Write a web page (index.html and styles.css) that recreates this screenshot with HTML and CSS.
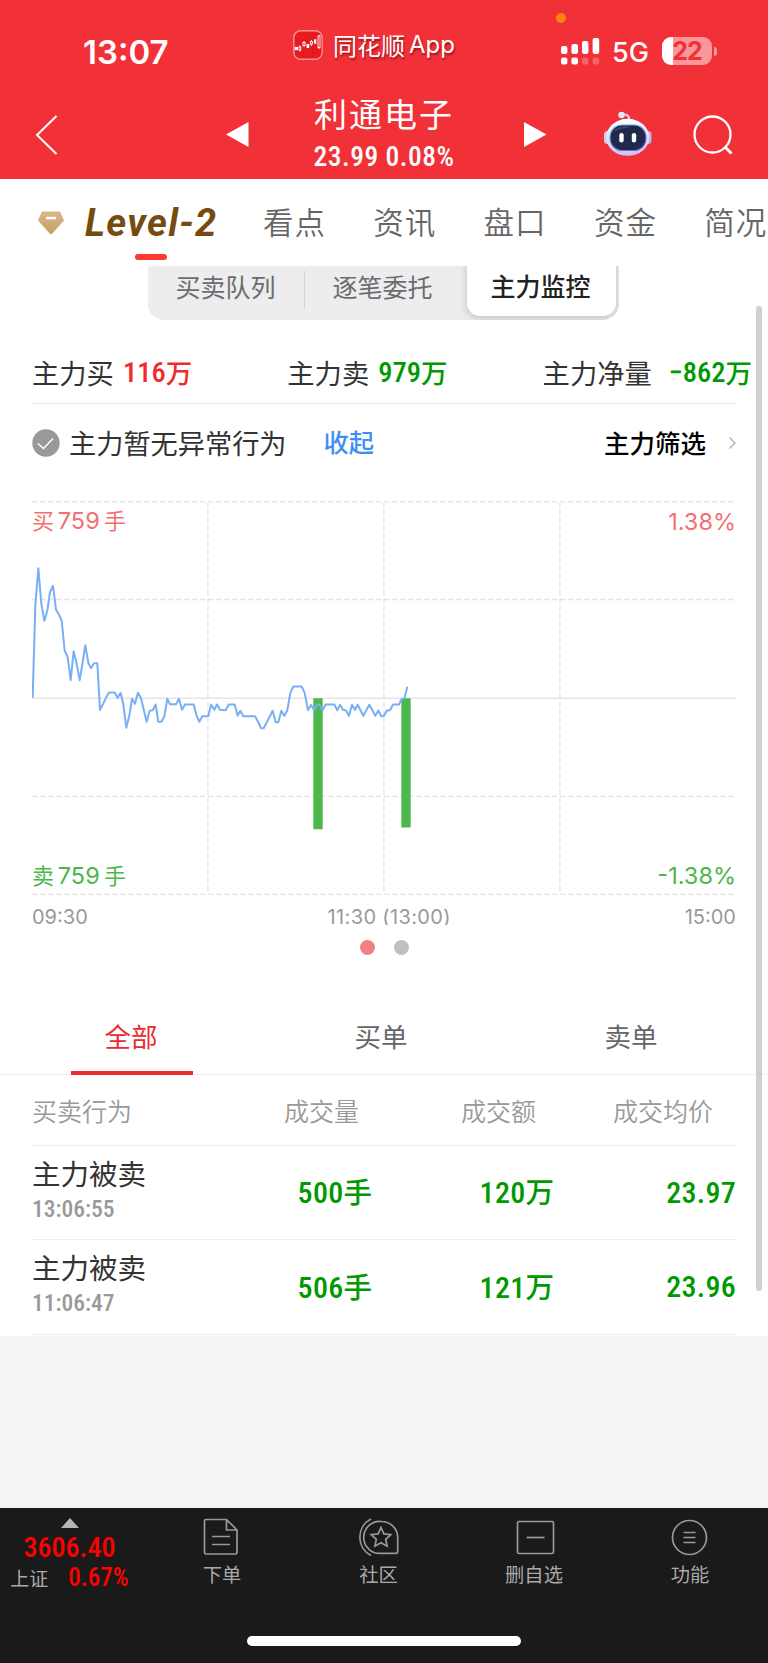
FILE: index.html
```html
<!DOCTYPE html>
<html lang="zh-CN">
<head>
<meta charset="utf-8">
<meta name="viewport" content="width=device-width">
<title>利通电子</title>
<link rel="stylesheet" href="styles.css">
</head>
<body>
<div class="app">
  <header class="header">
    <div class="status">
      <span class="clock">13:07</span>
      <div class="app-return">
        <svg class="app-icon" width="30" height="30" viewBox="0 0 30 30" fill="none">
          <rect x=".8" y=".8" width="28.4" height="28.4" rx="7" fill="#e51c20" stroke="#f99090" stroke-width="1.4"/>
          <path d="M2 10H28M20 2V28" stroke="#d81a20" stroke-width=".6"/>
          <g stroke="#fff" stroke-width=".9">
            <rect x="2" y="17.3" width="2.600" height="2.400" fill="#fff"/>
            <path d="M6.900 15.500v6"/><rect x="6" y="17" width="1.800" height="3" fill="#e51c20"/>
            <path d="M11 11v6"/><rect x="10" y="12.500" width="2" height="3" fill="#e51c20"/>
            <rect x="14" y="14.400" width="1.800" height="3.200" fill="#fff"/>
            <path d="M18.400 10v6"/><rect x="17.500" y="11.500" width="1.800" height="2.600" fill="#e51c20"/>
            <rect x="21.400" y="9.800" width="1.400" height="3.400" fill="#fff"/>
            <path d="M26 5v14"/><rect x="25" y="6" width="2" height="11.400" fill="#e51c20"/>
          </g>
        </svg>
        <span class="app-name">同花顺</span><span class="app-name-en">App</span>
      </div>
      <i class="privacy-dot"></i>
      <svg class="signal" width="39" height="28" viewBox="0 0 39 28" fill="#fff">
        <rect x="0" y="9" width="6.4" height="8" rx="2"/><rect x="10.4" y="7" width="6.6" height="10" rx="2"/>
        <rect x="21" y="4" width="6.4" height="13" rx="2"/><rect x="31.6" y="1" width="6.6" height="16" rx="2"/>
        <rect x="0" y="20.5" width="6.4" height="7" rx="2"/><rect x="10.4" y="20.5" width="6.6" height="7" rx="2"/>
        <rect x="21" y="20.5" width="6.4" height="7" rx="2" opacity=".25"/><rect x="31.6" y="20.5" width="6.6" height="7" rx="2" opacity=".25"/>
      </svg>
      <span class="net">5G</span>
      <div class="battery"><span class="battery-cell">22</span><i class="battery-nub"></i></div>
    </div>
    <div class="titlebar">
      <svg class="back" width="24" height="42" viewBox="0 0 24 42" fill="none" stroke="#fff" stroke-width="2"><path d="M21.5 2L2 21L21.5 40"/></svg>
      <svg class="prev" width="23" height="26" viewBox="0 0 23 26" fill="#fff"><path d="M0 12.5L22.5 0V25Z"/></svg>
      <div class="title">
        <h1 class="stock">利通电子</h1>
        <span class="quote din">23.99 0.08%</span>
      </div>
      <svg class="next" width="23" height="26" viewBox="0 0 23 26" fill="#fff"><path d="M22.5 12.5L0 0V25Z"/></svg>
      <svg class="robot" width="50" height="46" viewBox="0 0 50 46">
        <defs>
          <linearGradient id="shell" x1="0" y1="0" x2="0" y2="1"><stop offset="0" stop-color="#fff"/><stop offset="1" stop-color="#c9c5ef"/></linearGradient>
          <linearGradient id="rim" x1="0" y1="0" x2="1" y2="1"><stop offset="0" stop-color="#58c6dc"/><stop offset="1" stop-color="#8a4de0"/></linearGradient>
        </defs>
        <path d="M18 4.500C23 2 26.500 4.500 26 9" fill="none" stroke="#dcdcf6" stroke-width="2"/>
        <circle cx="18.500" cy="4" r="3.200" fill="#e3e6fa"/>
        <rect x="1" y="20" width="7" height="13" rx="3.500" fill="#cfcdee"/><rect x="41.500" y="20" width="7" height="13" rx="3.500" fill="#b9b8e4"/>
        <ellipse cx="24.700" cy="26.300" rx="21.500" ry="18.500" fill="url(#shell)"/>
        <rect x="7" y="14" width="36" height="25.500" rx="12" fill="#20294a" stroke="url(#rim)" stroke-width="1.200"/>
        <path d="M12 20Q16 16 25 16" fill="none" stroke="#4a5376" stroke-width="2" opacity=".6"/>
        <rect x="16.300" y="22" width="4.400" height="9.500" rx="2.200" fill="#fff"/><rect x="28.800" y="22" width="4.400" height="9.500" rx="2.200" fill="#fff"/>
      </svg>
      <svg class="search" width="41" height="41" viewBox="0 0 41 41" fill="none" stroke="#fff" stroke-width="2.300"><circle cx="19.500" cy="19.500" r="18"/><path d="M31.500 31.500L38.500 38.500" stroke-width="2.800"/></svg>
    </div>
  </header>

  <nav class="tabs">
    <svg class="gem" width="28" height="26" viewBox="0 0 28 26"><defs><linearGradient id="gold" x1="0" y1="0" x2="0" y2="1"><stop offset="0" stop-color="#d8b88b"/><stop offset="1" stop-color="#c99e61"/></linearGradient></defs><path d="M6 1.500H22Q23 1.500 23.500 2.500L26.700 9.500Q27 10.500 26.300 11.300L15 23.800Q14 24.700 13 23.800L1.700 11.300Q1 10.500 1.300 9.500L4.500 2.500Q5 1.500 6 1.500Z" fill="url(#gold)"/><rect x="9" y="6.800" width="10" height="2.500" fill="#fff"/></svg>
    <div class="tab-level"><span class="level">Level-2</span><i class="level-line"></i></div>
    <span class="tab">看点</span><span class="tab">资讯</span><span class="tab">盘口</span><span class="tab">资金</span><span class="tab">简况</span>
  </nav>

  <main class="panel">
    <div class="segment-clip">
      <div class="segment">
        <span class="seg">买卖队列</span><i class="seg-line"></i><span class="seg">逐笔委托</span><span class="seg seg-on">主力监控</span>
      </div>
    </div>

    <section class="stats">
      <div class="stat"><span>主力买</span><span class="amount up"><b class="din">116</b>万</span></div>
      <div class="stat"><span>主力卖</span><span class="amount down"><b class="din">979</b>万</span></div>
      <div class="stat stat-net"><span>主力净量</span><span class="amount down"><b class="din">−862</b>万</span></div>
    </section>

    <section class="notice">
      <svg width="28" height="28" viewBox="0 0 28 28"><circle cx="14" cy="14" r="13.700" fill="#999"/><path d="M6 14.500L11.500 19.500L21 9.500" fill="none" stroke="#fff" stroke-width="1.500"/></svg>
      <span class="notice-text">主力暂无异常行为</span>
      <a class="fold">收起</a>
      <span class="filter">主力筛选</span>
      <svg class="chevron" width="8" height="14" viewBox="0 0 8 14" fill="none" stroke="#aaa" stroke-width="1.200"><path d="M1.500 1.500L7 7L1.500 12.500"/></svg>
    </section>

    <section class="chart">
      <svg class="plot" width="704" height="395" viewBox="0 0 704 395">
        <g stroke="#e3e3e3" stroke-width="1.300" fill="none">
          <path stroke-dasharray="5.500 2.500" d="M0 .8H704M0 98.500H704M0 295.300H704M0 393.300H704"/>
          <path stroke-dasharray="5.500 2.500" d="M176 1V393M352 1V393M528 1V393"/>
          <path d="M0 197.200H704" stroke="#e6e6e6" stroke-width="1.500"/>
        </g>
        <path d="M281.300 197.200h9.400V328.200h-9.400zM369.300 197.200h9.400V326.500h-9.400z" fill="#4cb74b"/>
        <polyline transform="translate(-12 49.500) scale(.33333)" fill="none" stroke="#78aff5" stroke-width="6" stroke-linejoin="round" points="38,442 46,165 55,53 64,160 73,211 82,180 90,125 99,106 108,177 117,193 125,210 134,300 143,320 152,389 161,302 170,340 179,389 188,336 196,284 205,337 213,353 222,338 232,338 240,478 249,460 258,442 267,426 284,426 293,442 302,427 310,462 319,532 328,495 336,445 345,460 354,427 363,443 371,477 380,514 389,481 398,479 407,462 415,514 424,514 433,497 442,445 450,461 468,461 477,445 486,478 495,462 521,462 530,496 538,514 547,497 565,497 573,462 583,478 591,462 600,478 617,479 626,462 644,462 653,496 661,481 670,497 705,497 714,513 723,533 731,533 740,516 758,481 767,515 775,515 784,481 793,496 802,479 811,427 820,408 845,408 854,427 864,479 873,463 882,479 891,462 898,462 908,479 917,462 943,462 952,479 960,463 969,478 978,480 987,496 996,463 1005,478 1013,463 1030,496 1048,463 1066,496 1075,480 1084,497 1091,497 1101,480 1110,479 1119,462 1137,462 1145,445 1153,445 1162,409"/>
        <g class="axis-y">
          <text class="rise" x="0" y="28">买<tspan class="axis-n" x="25.800">759</tspan><tspan x="72">手</tspan></text>
          <text class="rise axis-n" x="704" y="28.500" text-anchor="end">1.38%</text>
          <text class="fall" x="0" y="383">卖<tspan class="axis-n" x="25.800">759</tspan><tspan x="72">手</tspan></text>
          <text class="fall axis-n" x="704" y="383" text-anchor="end">-1.38%</text>
        </g>
      </svg>
      <div class="axis-x"><span>09:30</span><span class="axis-mid">11:30 (13:00)</span><span>15:00</span></div>
      <div class="pager"><i class="dot dot-on"></i><i class="dot"></i></div>
    </section>

    <nav class="filters"><span class="filter-tab filter-on">全部</span><span class="filter-tab">买单</span><span class="filter-tab">卖单</span></nav>

    <section class="trades">
      <div class="row head"><span>买卖行为</span><span>成交量</span><span>成交额</span><span class="head-avg">成交均价</span></div>
      <div class="row">
        <div class="action"><span class="action-name">主力被卖</span><span class="time din">13:06:55</span></div>
        <span class="val"><b class="din">500</b>手</span><span class="val"><b class="din">120</b>万</span><span class="val"><b class="din">23.97</b></span>
      </div>
      <div class="row">
        <div class="action"><span class="action-name">主力被卖</span><span class="time din">11:06:47</span></div>
        <span class="val"><b class="din">506</b>手</span><span class="val"><b class="din">121</b>万</span><span class="val"><b class="din">23.96</b></span>
      </div>
    </section>
    <i class="scrollbar"></i>
  </main>

  <footer class="dock">
    <div class="dock-row">
      <div class="index">
        <svg width="18" height="10" viewBox="0 0 18 10"><path d="M9 0L18 10H0Z" fill="#b5b5b5"/></svg>
        <span class="index-value din">3606.40</span>
        <div class="index-sub"><span class="index-name">上证</span><span class="index-pct din">0.67%</span></div>
      </div>
      <div class="item order">
        <svg width="42" height="40" viewBox="0 0 42 40" fill="none" stroke="#999" stroke-width="1.700"><path d="M5 1.500H25.500L36 12V34.500Q36 36 34.500 36H5Q3.500 36 3.500 34.500V3Q3.500 1.500 5 1.500ZM25.500 2V12H36M11 18.500H29M11 26.500H29"/></svg>
        <span>下单</span>
      </div>
      <div class="item social">
        <svg width="42" height="40" viewBox="0 0 42 40" fill="none" stroke="#999" stroke-width="1.700"><path d="M13 1A20.500 20.500 0 0 0 13 37.500"/><path d="M23.500 3.500A16 16 0 1 0 23.500 35.300H38Q39.700 35.300 39.700 33.500V19.500A16.200 16 0 0 0 23.500 3.500Z"/><path d="M23 9.500L25.900 15.900L32.800 16.600L27.700 21.300L29.100 28.200L23 24.700L16.900 28.200L18.300 21.300L13.200 16.600L20.100 15.900Z"/></svg>
        <span>社区</span>
      </div>
      <div class="item remove">
        <svg width="42" height="40" viewBox="0 0 42 40" fill="none" stroke="#999" stroke-width="1.700"><rect x="4.500" y="3.500" width="36" height="32" rx="1.500"/><path d="M13.500 19.500H31.500"/></svg>
        <span>删自选</span>
      </div>
      <div class="item more">
        <svg width="42" height="40" viewBox="0 0 42 40" fill="none" stroke="#999" stroke-width="1.700"><circle cx="20.500" cy="19.500" r="17"/><path d="M14.500 14.500H26.500M14.500 19.500H26.500M14.500 24.500H26.500"/></svg>
        <span>功能</span>
      </div>
    </div>
    <i class="home-bar"></i>
  </footer>
</div>
</body>
</html>
```
FILE: styles.css
```css
* { box-sizing: border-box; }
body { margin: 0; background: #f4f4f4; font-family: "Noto Sans CJK SC", sans-serif; }
svg { display: block; flex: none; }
i { display: block; font-style: normal; }
span, b { white-space: nowrap; }
.din { font-family: Roboto, "Noto Sans CJK SC", sans-serif; font-weight: 500; font-stretch: 75%; }
.app { width: 768px; height: 1663px; display: flex; flex-direction: column; overflow: hidden; }

.header { height: 179px; background: #f23037; color: #fff; flex: none; }
.status { position: relative; height: 92px; display: flex; align-items: flex-start; }
.clock { margin: 31px 0 0 83px; width: 210px; font: 600 33px/42px Inter, sans-serif; }
.app-return { display: flex; align-items: center; margin-top: 30px; height: 30px; width: 268px; text-shadow: 1px 2px 2px rgba(90, 0, 0, .55); }
.app-name { margin-left: 10px; font-size: 24px; line-height: 30px; }
.app-name-en { margin-left: 4px; font: 400 24px/30px Inter, sans-serif; }
.privacy-dot { position: absolute; left: 556px; top: 13px; width: 10px; height: 10px; border-radius: 50%; background: #fe8308; }
.signal { margin-top: 37px; }
.net { margin: 36px 0 0 12px; width: 50px; font: 500 27px/33px Inter, sans-serif; }
.battery { display: flex; align-items: center; margin-top: 37px; height: 28px; gap: 2px; }
.battery-cell { width: 50px; height: 28px; border-radius: 9px; background: linear-gradient(90deg, #fff 11px, #f9989b 11px); color: #f23037; font: 700 25px/28px Inter, sans-serif; letter-spacing: -1px; text-align: center; }
.battery-nub { width: 3px; height: 9px; border-radius: 0 4px 4px 0; background: #f9989b; }
.titlebar { height: 87px; display: flex; align-items: flex-start; }
.back { margin: 22px 0 0 35px; }
.prev { margin: 30px 0 0 167px; }
.title { width: 275px; display: flex; flex-direction: column; align-items: center; }
.stock { margin: 0 0 0 -5px; font-size: 33px; font-weight: 400; line-height: 42px; letter-spacing: 2px; }
.quote { font-size: 27.500px; line-height: 32px; letter-spacing: .5px; margin: 7px 0 0 -5px; }
.next { margin: 30px 0 0 0; }
.robot { margin: 19px 0 0 56px; }
.search { margin: 23px 0 0 40px; }

.tabs { height: 87px; background: #fff; display: flex; flex: none; align-items: flex-start; overflow: hidden; }
.gem { margin: 31px 0 0 37px; }
.tab-level { width: 198px; flex: none; padding: 20px 0 0 20px; }
.level { display: block; font: italic 700 38px/48px Roboto, sans-serif; letter-spacing: 1.300px; color: #774a10; }
.level-line { width: 32px; height: 6px; border-radius: 3px; background: #fc3830; margin: 7px 0 0 50px; }
.tab { width: 110.300px; flex: none; font-size: 30.500px; line-height: 40px; letter-spacing: 1px; color: #666; padding-top: 22px; font-weight: 350; }

.panel { position: relative; height: 1070px; background: #fff; flex: none; }
.segment-clip { height: 54px; padding-left: 148px; display: flex; align-items: flex-end; overflow: hidden; }
.segment { width: 471px; height: 66px; flex: none; display: flex; align-items: center; border-radius: 16px; background: #ededef; padding: 0 3px 4px 0; overflow: hidden; }
.seg { width: 156px; text-align: center; font-size: 25px; line-height: 34px; color: #6c6c6c; padding: 2px 1px 0 0; }
.seg-line { width: 1px; height: 37px; margin-top: 8px; background: #d2d2d4; }
.seg-on { width: 149px; height: 62px; margin-left: auto; padding: 14px 2px 0 0; border-radius: 13px; background: #fff; color: #222; font-weight: 500; box-shadow: 0 2px 8px rgba(0, 0, 0, .2); }

.stats { height: 83.500px; margin: 0 32px; border-bottom: 1.500px solid #e9e9e9; display: flex; padding-top: 32px; color: #333; font-size: 27.300px; line-height: 40px; }
.stat { width: 255.300px; display: flex; gap: 9px; flex: none; }
.stat-net { gap: 17px; }
.amount { display: flex; font-size: 26.500px; font-weight: 500; line-height: 38px; padding-top: 1px; }
.amount b { font-size: 28.500px; padding-top: 1px; }
.up { color: #f2292d; }
.down { color: #090; }
.notice { height: 77px; margin: 0 32px; display: flex; align-items: center; padding-top: 1px; }
.notice-text { margin-left: 9px; font-size: 27.200px; line-height: 40px; color: #333; margin-top: -1px; }
.fold { margin: -3px 0 0 37px; font-size: 25.300px; font-weight: 500; color: #3d8ff4; }
.filter { margin: -2px 0 0 auto; font-size: 25.500px; font-weight: 500; color: #000; }
.chevron { margin-left: 22px; }

.chart { margin: 20px 32px 0; }
.axis-y { font-size: 22px; }
.axis-n { font-family: Inter, sans-serif; font-size: 23.500px; }
.rise { fill: #f36f6f; }
.fall { fill: #4cb74b; }
.axis-x { height: 29px; display: flex; justify-content: space-between; overflow: hidden; padding-top: 7px; color: #999; font: 400 20px/28px Inter, sans-serif; }
.axis-mid { letter-spacing: .35px; margin-left: 6px; }
.pager { display: flex; justify-content: center; gap: 19px; margin-top: 15px; }
.dot { width: 15px; height: 15px; border-radius: 50%; background: #c0c0c0; }
.dot-on { background: #f28080; }

.filters { margin-top: 44px; height: 76px; padding: 0 12px 0 6px; display: flex; border-bottom: 1px solid #eee; }
.filter-tab { position: relative; width: 250px; text-align: center; font-size: 26.500px; line-height: 73px; color: #666; }
.filter-on { color: #ed2a2f; }
.filter-on::after { content: ""; position: absolute; left: 65px; bottom: -1px; width: 122px; height: 4px; background: #ed2a2f; }

.trades { margin: 0 32px; }
.row { height: 94.500px; display: grid; grid-template-columns: 200px 140px 182px 182px; align-items: center; border-bottom: 1px solid #eee; }
.head { height: 71px; grid-template-columns: 252px 177px 152px 123px; color: #999; font-size: 25px; font-weight: 350; }
.action { display: flex; flex-direction: column; padding-bottom: 2px; }
.action-name { font-size: 28.500px; line-height: 36px; color: #333; }
.time { font-size: 23.500px; line-height: 37px; color: #999; }
.val { display: flex; align-items: baseline; justify-content: flex-end; color: #090; font-size: 28.500px; font-weight: 500; line-height: 40px; }
.val b { font-size: 30px; letter-spacing: .3px; padding-top: 1px; }

.scrollbar { position: absolute; left: 756px; top: 40px; width: 6px; height: 985px; border-radius: 3px; background: #d0d0d0; }

.dock { margin-top: auto; height: 155px; background: #1a1a1a; flex: none; color: #a9a9a9; }
.dock-row { height: 128px; display: flex; }
.index { width: 139px; display: flex; flex-direction: column; align-items: center; padding-top: 10px; }
.index-value { font-size: 28px; line-height: 40px; color: #f00; }
.index-sub { display: flex; gap: 20px; align-items: baseline; line-height: 28px; margin-top: -4px; }
.index-name { font-size: 19px; }
.index-pct { font-size: 25px; color: #f00; }
.item { display: flex; flex-direction: column; align-items: center; padding-top: 10px; font-size: 19.300px; line-height: 28px; width: 156px; gap: 2px; }
.order { margin-left: 5px; }
.social { padding-left: 1px; }
.home-bar { width: 274px; height: 10px; border-radius: 5px; background: #fff; margin-left: 247px; }
```
